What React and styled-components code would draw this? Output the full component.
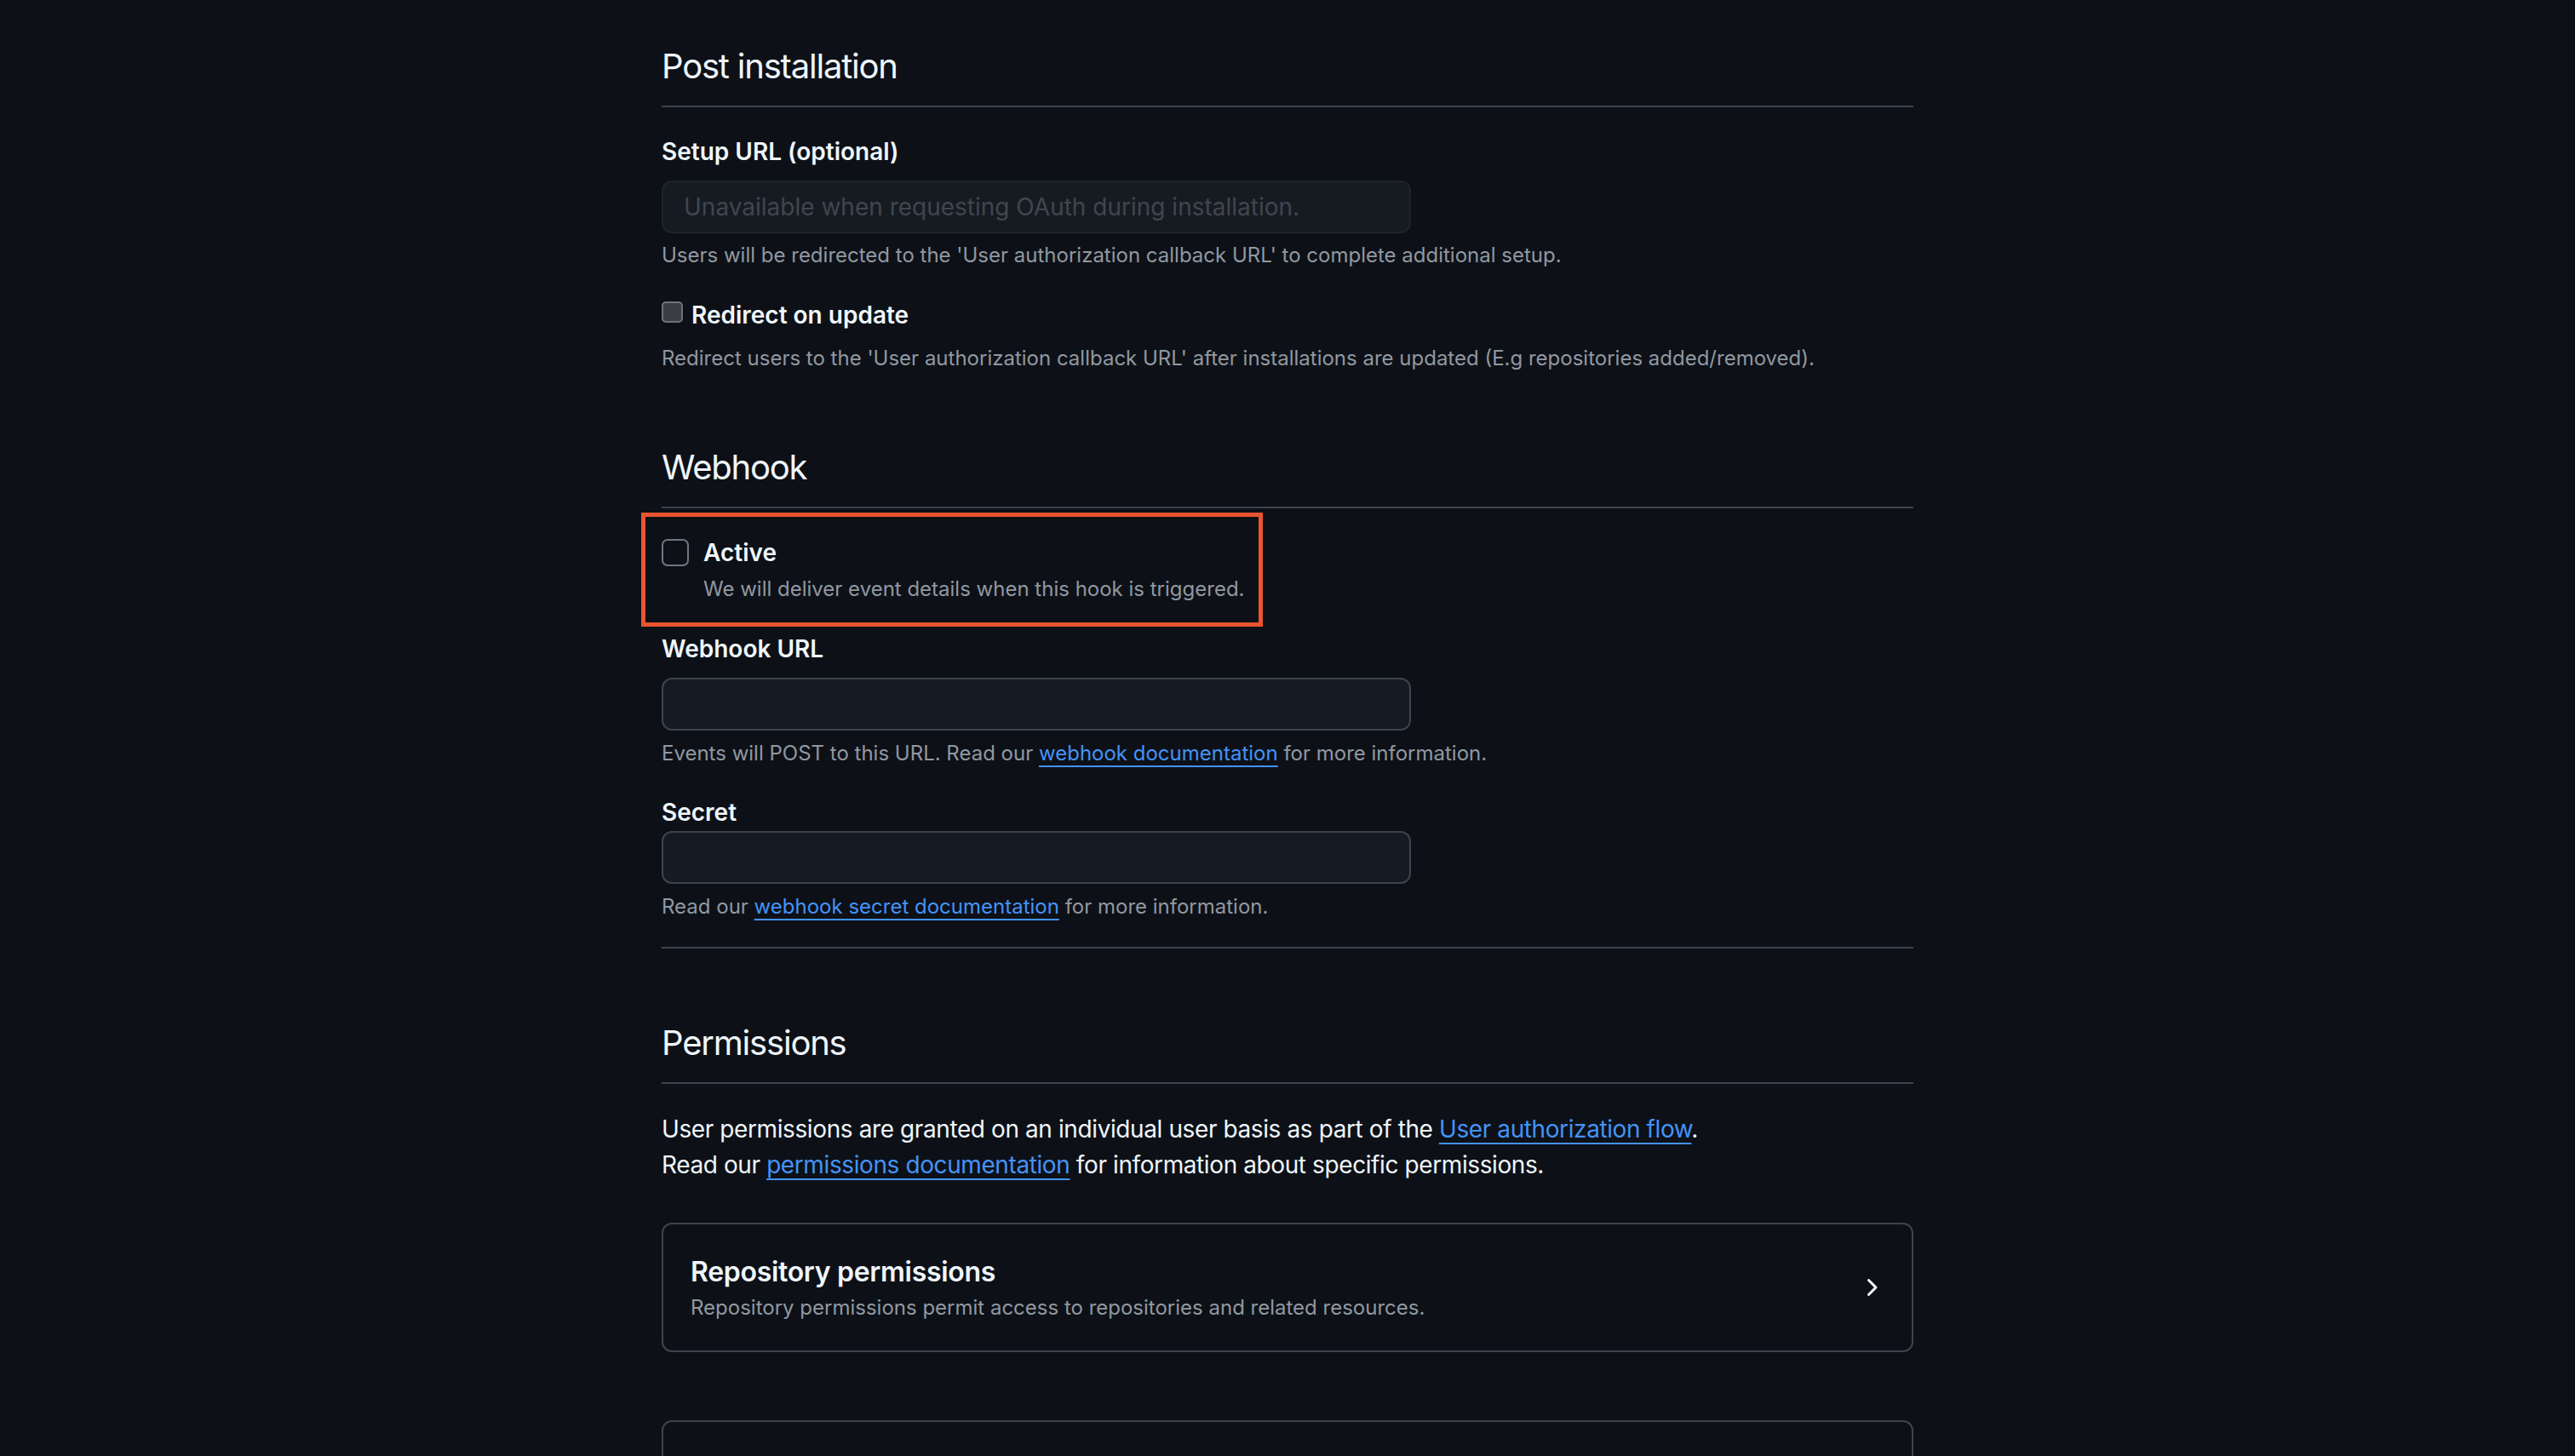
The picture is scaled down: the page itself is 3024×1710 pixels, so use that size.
import React from "react";
import styled, { createGlobalStyle, css } from "styled-components";

const GlobalStyle = createGlobalStyle`
  html, body {
    margin: 0;
    padding: 0;
    background: #0d1117;
  }
  body {
    font-family: Inter, "Noto Sans", "Liberation Sans", sans-serif;
    color: #f0f6fc;
    overflow: hidden;
  }
  * {
    box-sizing: border-box;
  }
`;

const Page = styled.main`
  width: 1470px;
  margin: 0 auto;
  padding-top: 48px;
`;

const Subhead = styled.div`
  margin-top: ${(p) => p.$top || 0}px;
  margin-bottom: 32px;
  padding-bottom: 16px;
  border-bottom: 2px solid #3d444d;
`;

const SubheadHeading = styled.h2`
  margin: 0;
  font-size: 40px;
  font-weight: 400;
  line-height: 60px;
  letter-spacing: -1.2px;
  color: #f0f6fc;
`;

const FormGroup = styled.div`
  margin-top: ${(p) => p.$top || 0}px;
`;

const Label = styled.label`
  display: block;
  font-size: 28px;
  font-weight: 600;
  line-height: 40px;
  margin-bottom: ${(p) => (p.$gap !== undefined ? p.$gap : 14)}px;
  color: #f0f6fc;
`;

const TextInput = styled.input`
  display: block;
  width: 880px;
  height: 62px;
  padding: 0 24px;
  font-family: inherit;
  font-size: 28px;
  color: #f0f6fc;
  background: #151b23;
  border: 2px solid #3d444d;
  border-radius: 12px;
  outline: none;

  ${(p) =>
    p.disabled &&
    css`
      background: #161b22;
      border-color: #1e242b;
      &::placeholder {
        color: #40464e;
      }
    `}
`;

const Note = styled.p`
  margin: ${(p) => p.$top || 8}px 0 0;
  font-size: 24px;
  line-height: 36px;
  color: #9198a1;
`;

const DocLink = styled.a`
  color: #4493f8;
  text-decoration: underline;
  text-decoration-thickness: 2px;
  text-underline-offset: 6px;
`;

const CheckRow = styled.div`
  display: flex;
  align-items: flex-start;
  margin-top: 32px;
`;

const Checkbox = styled.input.attrs({ type: "checkbox" })`
  appearance: none;
  flex: none;
  margin: 4px 0 0;
  ${(p) =>
    p.$native
      ? css`
          width: 25px;
          height: 25px;
          background: #3b3e43;
          border: 2px solid #6f7378;
          border-radius: 5px;
        `
      : css`
          width: 32px;
          height: 32px;
          background: transparent;
          border: 2px solid #6e7681;
          border-radius: 7px;
        `}
`;

const CheckLabel = styled.label`
  margin-left: ${(p) => p.$gap ?? 10}px;
  font-size: 28px;
  font-weight: 600;
  line-height: 40px;
  color: #f0f6fc;
`;

/* the orange box is a highlight drawn over the checkbox group */
const Highlighted = styled.div`
  position: relative;
  display: inline-flex;
  align-items: flex-start;

  &::after {
    content: "";
    position: absolute;
    inset: -27px -21px -26px -24px;
    border: 5px solid #ec5430;
    pointer-events: none;
  }
`;

const CheckText = styled.div`
  display: flex;
  flex-direction: column;
  margin-left: 17px;
`;

const Rule = styled.hr`
  margin: 29px 0 0;
  border: 0;
  border-top: 2px solid #3d444d;
`;

const Paragraph = styled.p`
  margin: 0 0 47px;
  font-size: 28px;
  line-height: 42px;
  letter-spacing: -0.4px;
  color: #f0f6fc;
`;

const PermissionCard = styled.div`
  display: flex;
  align-items: center;
  justify-content: space-between;
  margin-bottom: 80px;
  padding: 32px;
  border: 2px solid #3d444d;
  border-radius: 12px;
`;

const CardTitle = styled.div`
  font-size: 32px;
  font-weight: 600;
  line-height: 48px;
  letter-spacing: -0.3px;
  color: #f0f6fc;
`;

const CardText = styled.div`
  font-size: 24px;
  line-height: 36px;
  color: #9198a1;
`;

const Chevron = () => (
  <svg width="32" height="32" viewBox="0 0 16 16" fill="#f0f6fc">
    <path d="M6.22 3.22a.75.75 0 0 1 1.06 0l4.25 4.25a.75.75 0 0 1 0 1.06l-4.25 4.25a.751.751 0 0 1-1.042-.018.751.751 0 0 1-.018-1.042L9.94 8 6.22 4.28a.75.75 0 0 1 0-1.06Z" />
  </svg>
);

const cards = [
  {
    title: "Repository permissions",
    text: "Repository permissions permit access to repositories and related resources.",
  },
  {
    title: "Organization permissions",
    text: "Organization permissions permit access to organization related resources.",
  },
];

export default function App() {
  return (
    <>
      <GlobalStyle />
      <Page>
        <Subhead>
          <SubheadHeading>Post installation</SubheadHeading>
        </Subhead>

        <FormGroup>
          <Label htmlFor="setup-url">Setup URL (optional)</Label>
          <TextInput
            id="setup-url"
            disabled
            placeholder="Unavailable when requesting OAuth during installation."
          />
          <Note>
            Users will be redirected to the 'User authorization callback URL' to complete
            additional setup.
          </Note>
        </FormGroup>

        <CheckRow>
          <Checkbox $native id="redirect-update" />
          <CheckLabel htmlFor="redirect-update">Redirect on update</CheckLabel>
        </CheckRow>
        <Note $top={13}>
          Redirect users to the 'User authorization callback URL' after installations are
          updated (E.g repositories added/removed).
        </Note>

        <Subhead $top={80}>
          <SubheadHeading>Webhook</SubheadHeading>
        </Subhead>

        <Highlighted>
          <Checkbox id="hook-active" />
          <CheckText>
            <CheckLabel htmlFor="hook-active" $gap={0}>
              Active
            </CheckLabel>
            <Note $top={5}>We will deliver event details when this hook is triggered.</Note>
          </CheckText>
        </Highlighted>

        <FormGroup $top={32}>
          <Label htmlFor="hook-url">Webhook URL</Label>
          <TextInput id="hook-url" />
          <Note $top={9}>
            Events will POST to this URL. Read our <DocLink href="#">webhook documentation</DocLink>{" "}
            for more information.
          </Note>
        </FormGroup>

        <FormGroup $top={31}>
          <Label htmlFor="hook-secret" $gap={2}>
            Secret
          </Label>
          <TextInput id="hook-secret" />
          <Note $top={9}>
            Read our <DocLink href="#">webhook secret documentation</DocLink> for more
            information.
          </Note>
        </FormGroup>

        <Rule />

        <Subhead $top={81}>
          <SubheadHeading>Permissions</SubheadHeading>
        </Subhead>

        <Paragraph>
          User permissions are granted on an individual user basis as part of the{" "}
          <DocLink href="#">User authorization flow</DocLink>.
          <br />
          Read our <DocLink href="#">permissions documentation</DocLink> for information about
          specific permissions.
        </Paragraph>

        {cards.map((card) => (
          <PermissionCard key={card.title}>
            <div>
              <CardTitle>{card.title}</CardTitle>
              <CardText>{card.text}</CardText>
            </div>
            <Chevron />
          </PermissionCard>
        ))}
      </Page>
    </>
  );
}
